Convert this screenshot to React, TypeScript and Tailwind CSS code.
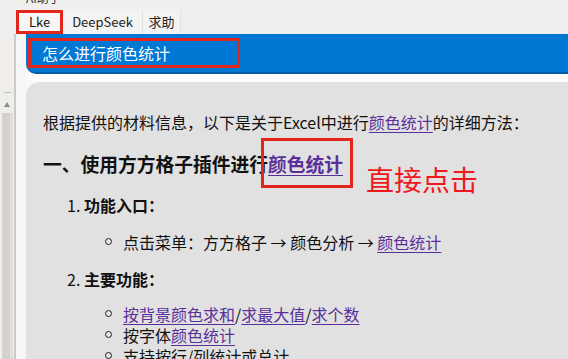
import { ReactNode } from 'react';

const Link = ({ children }: { children: ReactNode }) => (
  <span className="text-[#5b2f9a] underline underline-offset-[3px] decoration-1">{children}</span>
);

const Bullet = ({ children, className = '' }: { children: ReactNode; className?: string }) => (
  <li className={`flex items-center h-[21px] ${className}`}>
    <span className="w-[7px] h-[7px] rounded-full border border-[#222] ml-[38px] mr-[11px] shrink-0" />
    <span className="leading-[18px]">{children}</span>
  </li>
);

const App = () => {
  return (
    <div
      className="w-[568px] h-[359px] overflow-hidden bg-[#efefef] flex flex-col text-[#111]"
      style={{ fontFamily: '"Microsoft YaHei", "Noto Sans CJK SC", "Noto Sans", sans-serif' }}
    >
      {/* cut-off title strip */}
      <div className="h-[10px] shrink-0 overflow-hidden pl-[26px]">
        <div className="text-[12px] leading-[12px] -mt-[8px] text-[#333]">AI助手</div>
      </div>

      {/* tabs */}
      <div className="h-[24px] shrink-0 flex items-stretch pl-[16px]">
        <div className="w-[47px] border-[3px] border-[#e3261b] bg-[#f6f6f6] flex items-center pl-[10px] text-[13px]">
          Lke
        </div>
        <div className="w-[80px] bg-[#f3f3f3] border-r border-[#e2e2e2] flex items-center justify-center text-[13px] text-[#222]">
          DeepSeek
        </div>
        <div className="w-[38px] bg-[#f3f3f3] border-r border-[#e2e2e2] flex items-center justify-center text-[13px] text-[#222]">
          求助
        </div>
      </div>

      <div className="flex-1 flex min-h-0">
        {/* left rail with scrollbar */}
        <div className="w-[26px] flex shrink-0">
          <div className="w-[16px] bg-[#f0eeec] flex flex-col items-center border-r-2 border-[#cdc9c5]">
            <div className="mt-[58px] w-[7px] h-px bg-[#bdbdbd]" />
            <div className="mt-[9px] w-0 h-0 border-l-[3px] border-r-[3px] border-b-[5px] border-l-transparent border-r-transparent border-b-[#8a8a8a]" />
            <div className="mt-[6px] flex-1 w-[11px] bg-[#d5d1cd] border-r-[3px] border-[#e2dedb]" />
          </div>
          <div className="flex-1 bg-[#f6f6f6]" />
        </div>

        {/* main */}
        <div className="flex-1 flex flex-col min-h-0 bg-[#f8f8f8]">
          <div className="h-[40px] shrink-0 bg-[#0078d4] rounded-bl-[10px] border-b-2 border-[#005ea8] flex items-center">
            <div className="ml-[2px] h-[30px] w-[212px] border-[3px] border-[#e3261b] flex items-center pl-[11px] text-white text-[16px]">
              怎么进行颜色统计
            </div>
          </div>
          <div className="h-[8px] shrink-0 bg-[#fbfbfb]" />
          <div className="flex-1 bg-[#e1e1e1] rounded-tl-[14px] pl-[17px] pt-[28px] text-[16px] relative">
            <p className="leading-[24px]">
              根据提供的材料信息，以下是关于Excel中进行<Link>颜色统计</Link>的详细方法：
            </p>
            <h2 className="mt-[15px] leading-[30px] text-[18.75px] font-bold flex items-center">
              一、使用方方格子插件进行
              <span className="relative">
                <Link>颜色统计</Link>
                <span className="absolute -left-[7px] -top-[11px] w-[92px] h-[50px] border-[3px] border-[#e3261b]" />
              </span>
            </h2>
            <span className="absolute left-[340px] top-[79px] text-[28px] leading-[36px] text-[#f0181a]">直接点击</span>

            <ol>
              <li className="mt-[14px] leading-[24px] pl-[24px]">
                1. <span className="font-bold">功能入口：</span>
                <ul>
                  <Bullet className="mt-[14px]">
                    点击菜单：方方格子 → 颜色分析 → <Link>颜色统计</Link>
                  </Bullet>
                </ul>
              </li>
              <li className="mt-[15px] leading-[24px] pl-[24px]">
                2. <span className="font-bold">主要功能：</span>
                <ul className="mt-[12px]">
                  <Bullet>
                    <Link>按背景颜色求和</Link>/<Link>求最大值</Link>/<Link>求个数</Link>
                  </Bullet>
                  <Bullet>
                    按字体<Link>颜色统计</Link>
                  </Bullet>
                  <Bullet>支持按行/列统计或总计</Bullet>
                </ul>
              </li>
            </ol>
          </div>
        </div>
      </div>
    </div>
  );
};

export default App;
